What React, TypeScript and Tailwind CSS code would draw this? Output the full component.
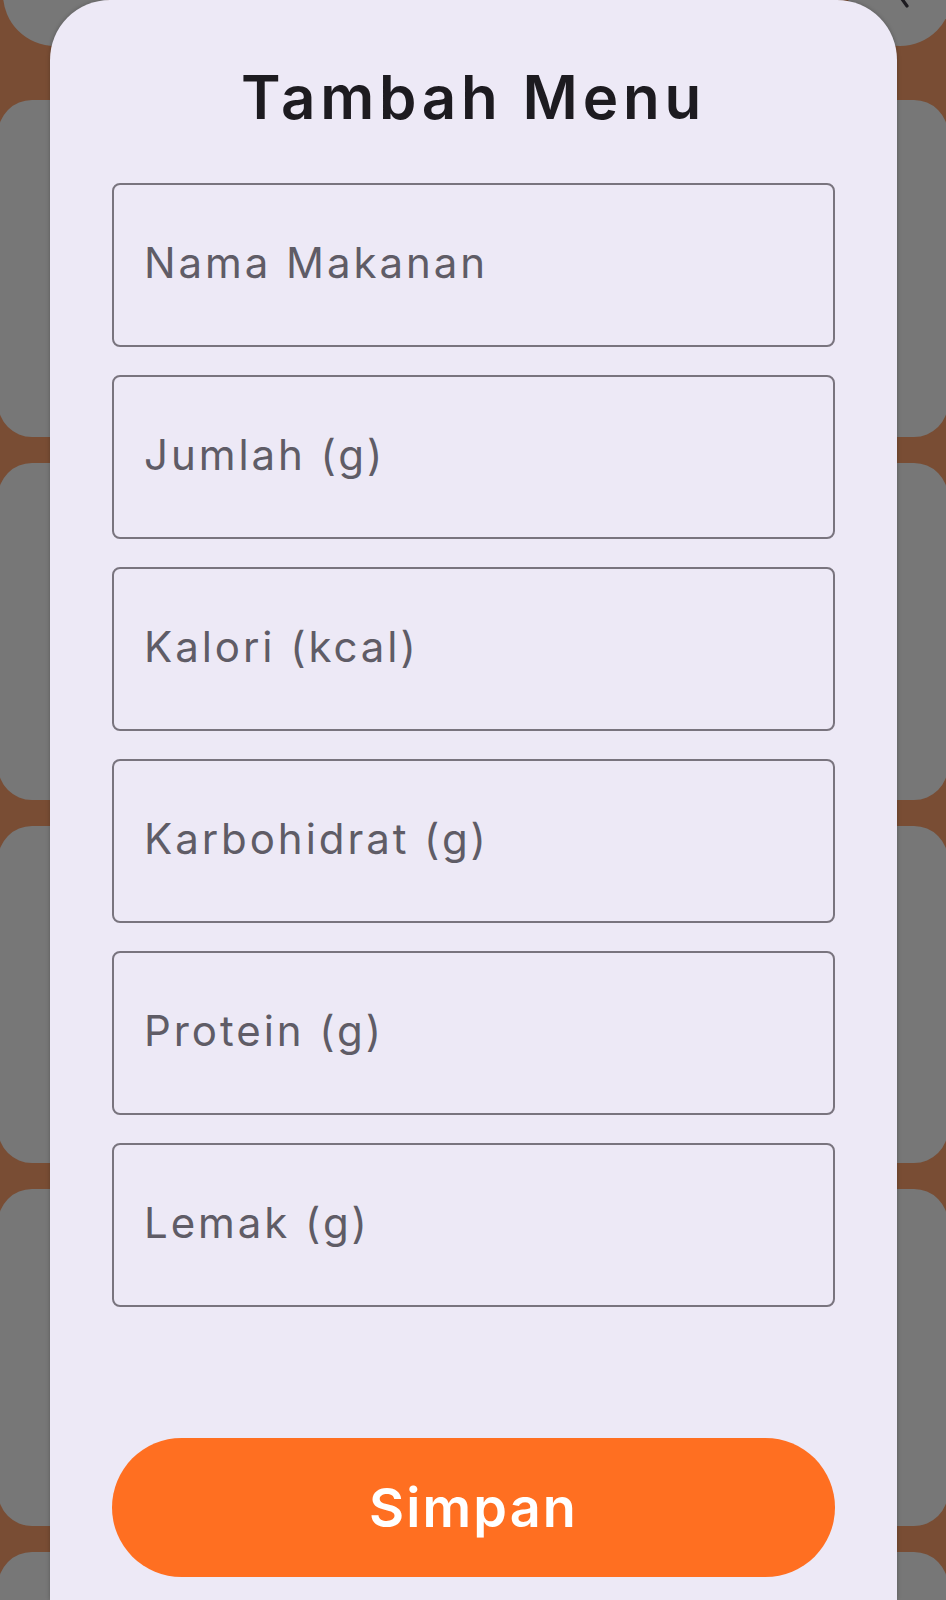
const fields = [
  'Nama Makanan',
  'Jumlah (g)',
  'Kalori (kcal)',
  'Karbohidrat (g)',
  'Protein (g)',
  'Lemak (g)',
]

// dimmed list page that sits behind the sheet
function Backdrop() {
  return (
    <div className="flex flex-col">
      <div className="flex justify-between h-[104px] mt-[-58px]">
        <div className="w-[104px] h-[104px] rounded-full bg-[#777777] ml-[3px]" />
        <div className="w-[104px] h-[104px] rounded-full bg-[#777777] mr-[-6px]">
          {/* search icon, mostly hidden under the sheet */}
          <svg viewBox="0 0 104 104" className="w-[104px] h-[104px]" fill="none" stroke="#1d1b20" strokeWidth={3.2} strokeLinecap="round">
            <circle cx="36" cy="36" r="13" />
            <line x1="46" y1="46" x2="59" y2="64" />
          </svg>
        </div>
      </div>
      <div className="flex flex-col gap-[26px] mt-[54px] mx-[-2px]">
        {[0, 1, 2, 3, 4].map((i) => (
          <div key={i} className="h-[337px] rounded-[34px] bg-[#777777]" />
        ))}
      </div>
    </div>
  )
}

export default function App() {
  return (
    <div
      className="relative h-[1600px] w-full overflow-hidden bg-[#794d34]"
      style={{ fontFamily: 'Inter, "Noto Sans", sans-serif' }}
    >
      <Backdrop />

      {/* bottom sheet */}
      <div className="absolute top-0 bottom-0 left-[50px] right-[49px] rounded-t-[60px] bg-[#ede9f6] shadow-[0_0_4px_rgba(0,0,0,0.25)] flex flex-col px-[62px]">
        <h1 className="pt-[67px] text-[60px] leading-[60px] font-semibold text-center text-[#1d1b20] tracking-[0.08em]">
          Tambah Menu
        </h1>

        <div className="flex flex-col gap-[28px] mt-[56px]">
          {fields.map((f) => (
            <input
              key={f}
              placeholder={f}
              className="h-[164px] w-full rounded-[8px] border-2 border-[#79747e] bg-transparent pl-[30px] pb-[5px] text-[42px] tracking-[0.07em] text-[#1d1b20] placeholder:text-[#5f5c66] outline-none"
            />
          ))}
        </div>

        <button className="mt-[131px] h-[139px] w-full rounded-full bg-[#ff6f21] text-white text-[54px] font-semibold tracking-[0.04em]">
          Simpan
        </button>
      </div>
    </div>
  )
}
